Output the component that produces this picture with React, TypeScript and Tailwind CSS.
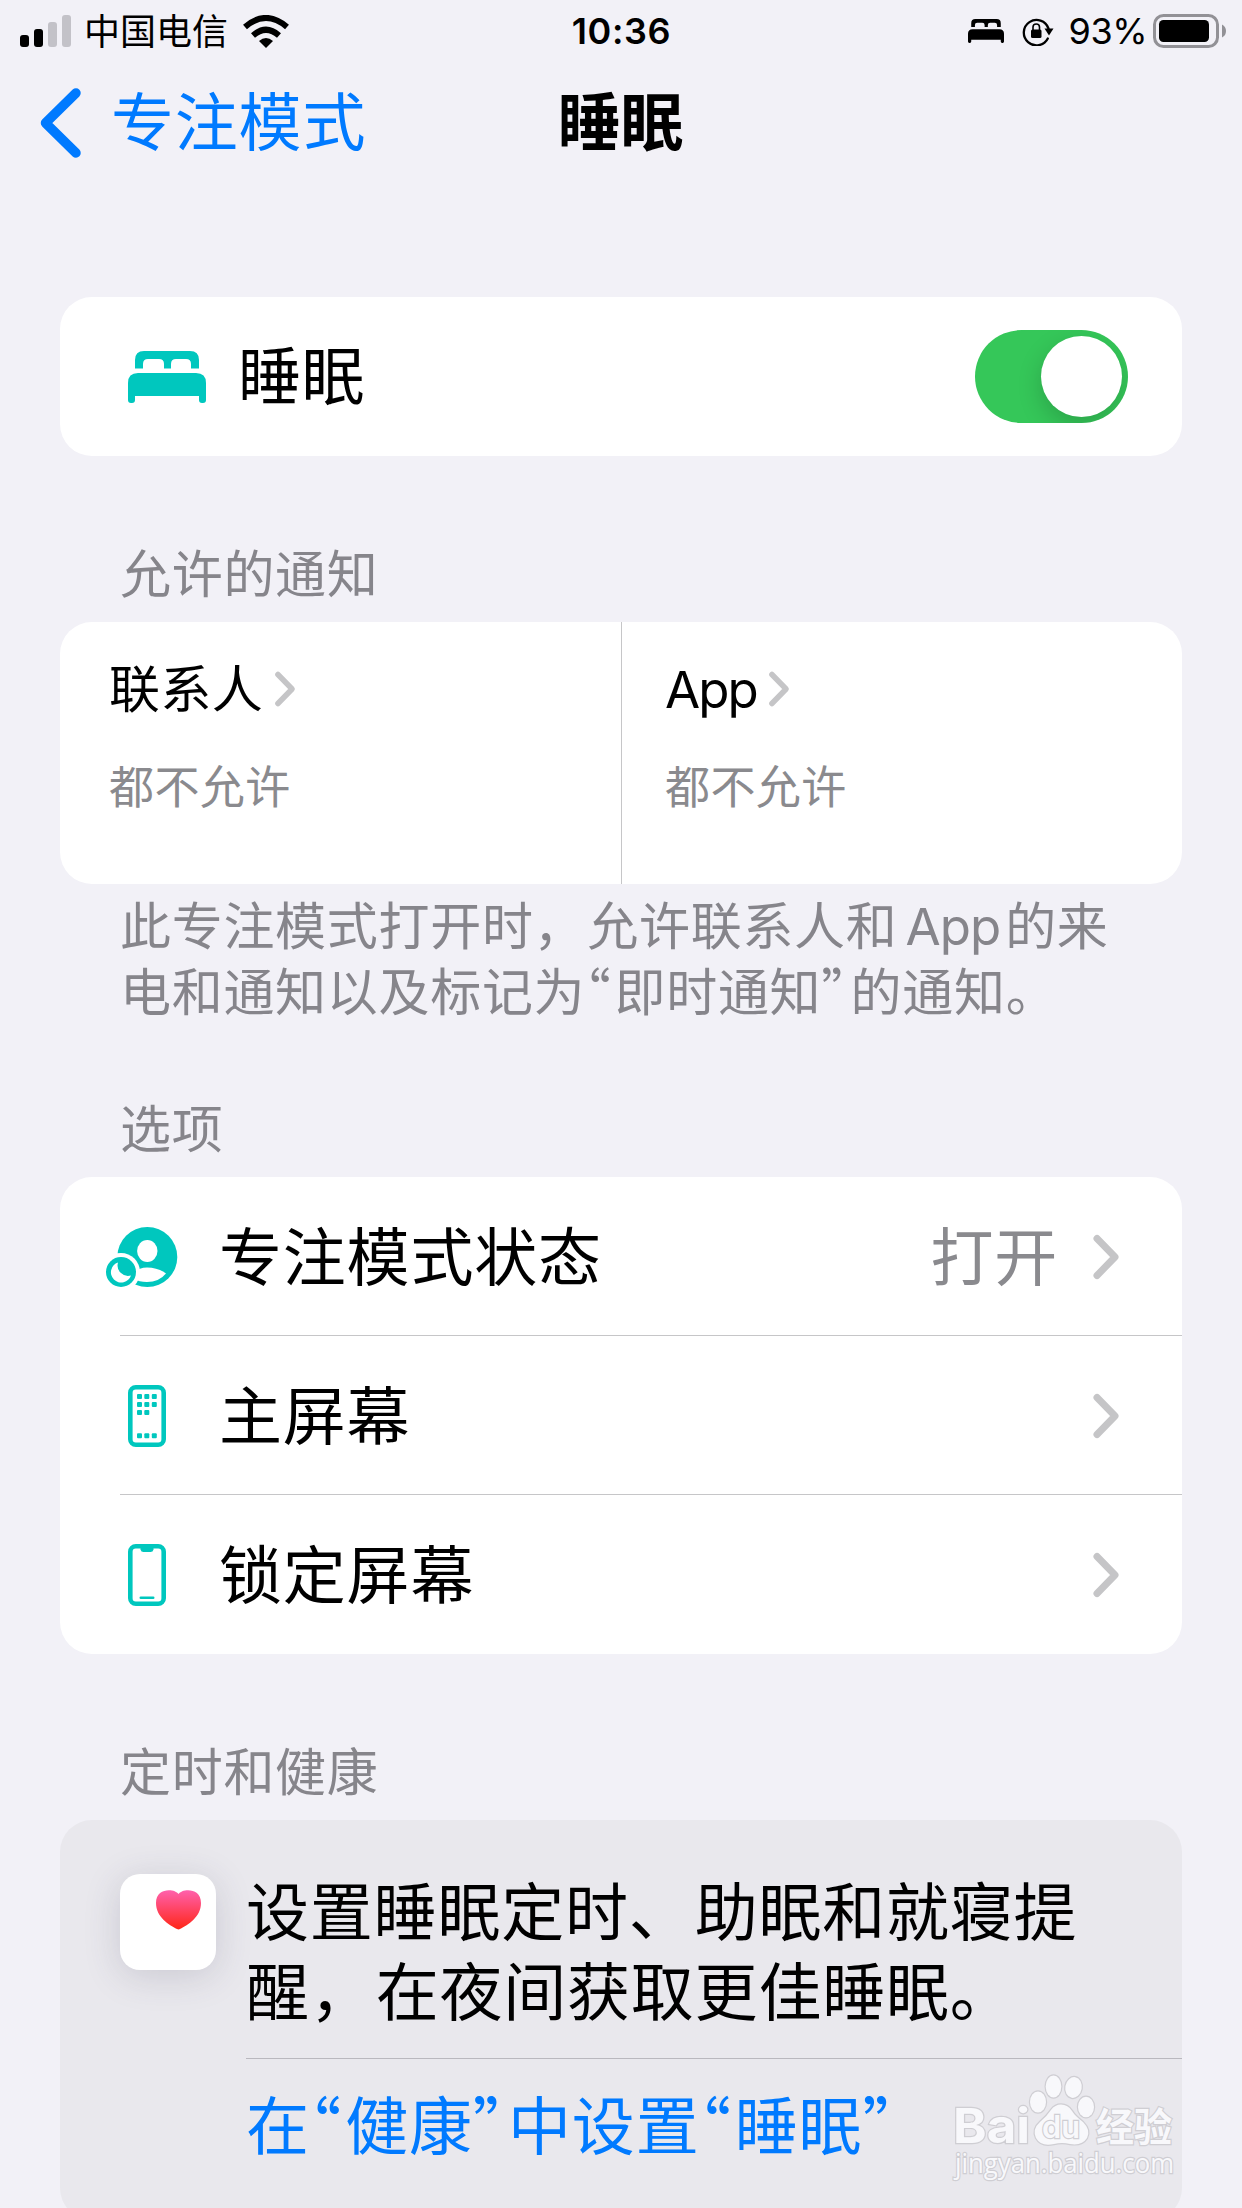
import React from 'react';
import clsx from 'clsx';

interface OptionItem {
  label: string;
  value?: string;
  icon: React.ReactNode;
}

const options: OptionItem[] = [
  { label: '专注模式状态', value: '打开', icon: <FocusStatusIcon /> },
  { label: '主屏幕', icon: <HomeScreenIcon /> },
  { label: '锁定屏幕', icon: <LockScreenIcon /> },
];

const allowed = [
  { title: '联系人', detail: '都不允许' },
  { title: 'App', detail: '都不允许' },
];

export default function App() {
  return (
    <div
      lang="zh-CN"
      className="relative h-[2208px] w-[1242px] overflow-hidden bg-[#f2f1f7] font-['Inter','Noto_Sans_CJK_SC',sans-serif] text-black"
    >
      <StatusBar />
      <NavBar />

      <main className="px-[60px] pt-[114px]">
        {/* Sleep switch */}
        <section className="flex h-[159px] items-center rounded-[32px] bg-white pr-[54px] pl-[68px]">
          <BedIcon className="h-[52px] w-[78px] text-[#00c7be]" />
          <span className="ml-[32px] flex-1 text-[63px] leading-none tracking-[0.6px]">睡眠</span>
          <Toggle />
        </section>

        {/* Allowed notifications */}
        <SectionHeader className="mt-[83px]">允许的通知</SectionHeader>
        <section className="grid h-[262px] grid-cols-[562px_1fr] rounded-[32px] bg-white">
          {allowed.map((item, i) => (
            <div
              key={item.title}
              className={clsx('pt-[41px]', i === 0 ? 'border-r border-[#c6c6c8] pl-[49px]' : 'pl-[43px]')}
            >
              <div className="flex h-[52px] items-center">
                <span className={clsx('text-[51px] leading-none', i === 0 ? 'tracking-[0.4px]' : 'tracking-[-2px]')}>
                  {item.title}
                </span>
                <Chevron className="ml-[11px] h-[38px] w-[22px]" />
              </div>
              <p className="mt-[47px] text-[45px] leading-[52px] tracking-[0.4px] text-[#8a8a8e]">{item.detail}</p>
            </div>
          ))}
        </section>
        <p className="h-[132px] pl-[60px] mt-[10px] text-[51px] leading-[66px] tracking-[0.7px] whitespace-nowrap text-[#86858b]">
          <Copy text="此专注模式打开时，允许联系人和App的来" />
          <br />
          <Copy text="电和通知以及标记为“即时通知”的通知。" />
        </p>

        {/* Options */}
        <SectionHeader className="mt-[68px]">选项</SectionHeader>
        <section className="overflow-hidden rounded-[32px] bg-white">
          {options.map((item, i) => (
            <OptionRow key={item.label} item={item} last={i === options.length - 1} />
          ))}
        </section>

        {/* Schedule and health */}
        <SectionHeader className="mt-[83px]">定时和健康</SectionHeader>
        <section className="h-[400px] rounded-[32px] bg-[#e9e8ed] pl-[60px]">
          <div className="flex">
            <HealthIcon />
            <div className="ml-[30px] flex-1">
              <p className="h-[239px] border-b border-[#b9b8be] pt-[52px] text-[63px] leading-[80px] tracking-[0.8px] whitespace-nowrap">
                <Copy text="设置睡眠定时、助眠和就寝提" />
                <br />
                <Copy text="醒，在夜间获取更佳睡眠。" />
              </p>
              <p className="pt-[27px] text-[63px] leading-[80px] tracking-[0.8px] whitespace-nowrap text-[#007aff]">
                <Copy text="在“健康”中设置“睡眠”" />
              </p>
            </div>
          </div>
        </section>
      </main>

      <Watermark />
    </div>
  );
}

// Body copy with half-width curly quotes and a little air around latin words
function Copy({ text }: { text: string }) {
  return (
    <>
      {text.split(/([“”，、]|App)/).map((part, i) => {
        if (part === '“' || part === '”') {
          return (
            <span key={i} className="mr-[3px] font-['Noto_Sans_CJK_SC',sans-serif] leading-none [font-feature-settings:'halt']">
              {part}
            </span>
          );
        }
        if (part === '，' || part === '、') return <span key={i} className="mr-[2px]">{part}</span>;
        if (part === 'App') return <span key={i} className="mr-[5px] ml-[8px] tracking-[-1px]">{part}</span>;
        return part;
      })}
    </>
  );
}

function StatusBar() {
  return (
    <header className="grid h-[62px] grid-cols-[1fr_auto_1fr] items-center pr-[15px] pl-[20px] text-[36px] leading-none">
      <div className="flex items-center">
        <svg viewBox="0 0 51 32" className="h-[32px] w-[51px]">
          <rect x="0" y="20" width="9" height="12" rx="3" />
          <rect x="14" y="14" width="9" height="18" rx="3" />
          <rect x="28" y="7" width="9" height="25" rx="3" fill="#c3c2c8" />
          <rect x="42" y="0" width="9" height="32" rx="3" fill="#c3c2c8" />
        </svg>
        <span className="mt-[2px] ml-[13px]">中国电信</span>
        <svg viewBox="0 0 46 33" className="ml-[15px] h-[33px] w-[46px]">
          <path d="M23 33 L16 26 Q23 20 30 26 Z" />
          <path d="M10 20.5 Q23 9 36 20.5" fill="none" stroke="#000" strokeWidth="6" />
          <path d="M2 12 Q23 -6 44 12" fill="none" stroke="#000" strokeWidth="6" />
        </svg>
      </div>
      <span className="-ml-[4px] font-semibold tracking-[0.6px]">10:36</span>
      <div className="flex items-center justify-end">
        <BedIcon className="h-[24px] w-[36px]" />
        <RotationLockIcon />
        <span className="ml-[15px] tracking-[-0.5px]">93%</span>
        <svg viewBox="0 0 74 34" className="ml-[6px] h-[34px] w-[74px]">
          <rect x="1.5" y="1.5" width="63" height="31" rx="9" fill="none" stroke="#929196" strokeWidth="3" />
          <rect x="6" y="6" width="50" height="22" rx="4.5" />
          <path d="M69 10.5 Q73 12.500 73 17 Q73 21.500 69 23.500 Z" fill="#929196" />
        </svg>
      </div>
    </header>
  );
}

function NavBar() {
  return (
    <nav className="grid h-[121px] grid-cols-[1fr_auto_1fr] items-center pl-[40px] text-[63px] leading-none">
      <a className="flex items-center text-[#007aff]">
        <svg viewBox="0 0 42 70" className="h-[70px] w-[42px]">
          <path
            d="M36 5 L5.500 35 L36 65"
            fill="none"
            stroke="currentColor"
            strokeWidth="9.500"
            strokeLinecap="round"
            strokeLinejoin="round"
          />
        </svg>
        <span className="ml-[29px] tracking-[0.8px]">专注模式</span>
      </a>
      <h1 className="-ml-[41px] font-bold">睡眠</h1>
      <span />
    </nav>
  );
}

function SectionHeader({ className, children }: { className?: string; children: React.ReactNode }) {
  return (
    <h2 className={clsx('h-[83px] pt-[3px] pl-[60px] text-[51px] leading-[66px] tracking-[0.7px] text-[#86858b]', className)}>
      {children}
    </h2>
  );
}

function OptionRow({ item, last }: { item: OptionItem; last: boolean }) {
  return (
    <div className="flex h-[159px] pl-[46px]">
      <div className="flex w-[72px] items-center">{item.icon}</div>
      <div className="relative flex flex-1 items-center pr-[62px] pl-[41px] text-[63px] leading-none tracking-[0.8px]">
        <span className="flex-1 pt-[2px]">{item.label}</span>
        {item.value && <span className="mr-[34px] pt-[2px] text-[#8a8a8e]">{item.value}</span>}
        <Chevron className="h-[46px] w-[28px]" />
        {!last && <div className="absolute right-0 bottom-0 -left-[58px] h-px bg-[#c6c6c8]" />}
      </div>
    </div>
  );
}

function Toggle() {
  return (
    <button className="flex h-[93px] w-[153px] items-center justify-end overflow-hidden rounded-full bg-[#35c759] p-[6px]">
      <span className="size-[81px] rounded-full bg-white shadow-[0_9px_24px_rgba(0,0,0,0.18)]" />
    </button>
  );
}

function Chevron({ className }: { className?: string }) {
  return (
    <svg viewBox="0 0 28 46" className={className}>
      <path
        d="M5 4.500 L23 23 L5 41.500"
        fill="none"
        stroke="#c5c5c7"
        strokeWidth="7"
        strokeLinecap="round"
        strokeLinejoin="round"
      />
    </svg>
  );
}

function BedIcon({ className }: { className?: string }) {
  return (
    <svg viewBox="0 0 78 52" fill="currentColor" className={className}>
      <path d="M7 17.500 V9 Q7 0 16 0 H62 Q71 0 71 9 V17.500 H63 V13 Q63 8 58 8 H48 Q43 8 43 13 V17.500 H36 V13 Q36 8 31 8 H20 Q15 8 15 13 V17.500 Z" />
      <path d="M0 32 Q0 22 10 22 H68 Q78 22 78 32 V49 Q78 52 75 52 H74 Q71 52 71 49 V45 H7 V49 Q7 52 4 52 H3 Q0 52 0 49 Z" />
    </svg>
  );
}

function RotationLockIcon() {
  return (
    <svg viewBox="0 0 32 30" className="ml-[18px] h-[30px] w-[32px]">
      <path
        d="M25.800 22.500 A12.700 12.700 0 1 1 26.500 12.500"
        fill="none"
        stroke="#000"
        strokeWidth="2.300"
        strokeLinecap="round"
      />
      <path d="M22.500 12.500 H31.500 L27 19.500 Z" />
      <rect x="9" y="13.500" width="10.500" height="8.500" rx="1.500" />
      <path d="M11 14 V11 Q11 8 14.200 8 Q17.500 8 17.500 11 V14" fill="none" stroke="#000" strokeWidth="1.600" />
    </svg>
  );
}

function FocusStatusIcon() {
  return (
    <svg viewBox="0 0 72 60" className="h-[60px] w-[72px]">
      <circle cx="41.300" cy="30" r="30" fill="#00c7be" />
      <ellipse cx="41.300" cy="24" rx="10.200" ry="11" fill="#fff" />
      <path d="M26 48 Q31 40.500 41 40.500 Q52 40.500 60 46.500 Q53 55 41 55 Q33 55 28 52 Z" fill="#fff" />
      <circle cx="15" cy="45" r="19" fill="#fff" />
      <circle cx="15" cy="45" r="15" fill="#00c7be" />
      <path d="M12 35.500 A10.300 10.300 0 1 0 25 48.500 A10.500 10.500 0 0 1 12 35.500 Z" fill="#fff" />
    </svg>
  );
}

function HomeScreenIcon() {
  const dots = [
    [9, 9], [16.3, 9], [23.8, 9],
    [9, 17], [16.3, 17], [23.8, 17],
    [9, 25], [16.3, 25],
    [9, 48.3], [16.3, 48.3], [23.8, 48.3],
  ];
  return (
    <svg viewBox="0 0 38 62" className="ml-[22px] h-[62px] w-[38px]">
      <rect x="2.300" y="2.300" width="33.400" height="57.400" rx="5.500" fill="none" stroke="#00c7be" strokeWidth="4.600" />
      {dots.map(([x, y]) => (
        <rect key={`${x}-${y}`} x={x} y={y} width="5" height="5" rx="1" fill="#00c7be" />
      ))}
    </svg>
  );
}

function LockScreenIcon() {
  return (
    <svg viewBox="0 0 38 62" className="ml-[22px] h-[62px] w-[38px]">
      <rect x="2.300" y="2.300" width="33.400" height="57.400" rx="5.500" fill="none" stroke="#00c7be" strokeWidth="4.600" />
      <path d="M12.500 3 H25.500 V5.500 Q25 8 22.500 8 H15.500 Q13 8 12.500 5.500 Z" fill="#00c7be" />
      <rect x="11.500" y="52.500" width="15" height="2.500" rx="1.250" fill="#00c7be" />
    </svg>
  );
}

function HealthIcon() {
  return (
    <div className="mt-[54px] size-[96px] rounded-[20px] bg-white shadow-[0_6px_36px_rgba(60,60,90,0.18)]">
      <svg viewBox="0 0 96 96" className="size-full">
        <defs>
          <linearGradient id="heart" x1="0" y1="0" x2="0" y2="1">
            <stop offset="0" stopColor="#ff61ad" />
            <stop offset="1" stopColor="#ff2617" />
          </linearGradient>
        </defs>
        <path
          d="M58.500 20 C62 14.500 81 13 81 29 C81 43 68 51 60 55 Q58.500 55.800 57 55 C49 51 36 43 36 29 C36 13 55 14.500 58.500 20 Z"
          fill="url(#heart)"
        />
      </svg>
    </div>
  );
}

// Translucent site mark over the bottom right corner
function Watermark() {
  return (
    <svg
      viewBox="0 0 240 124"
      className="absolute top-[2072px] left-[950px] h-[124px] w-[240px]"
      fill="#f8f8fb"
      stroke="#cfced3"
      strokeWidth="2.400"
      paintOrder="stroke"
    >
      <text x="3" y="71" textLength="77" lengthAdjust="spacingAndGlyphs" className="font-['Inter',sans-serif] text-[48px] font-bold">
        Bai
      </text>
      <ellipse cx="88" cy="30" rx="8" ry="10.500" />
      <ellipse cx="103.500" cy="14.500" rx="7.800" ry="11" />
      <ellipse cx="123.500" cy="15.500" rx="8.200" ry="10.500" transform="rotate(10 123.500 15.500)" />
      <ellipse cx="136" cy="35" rx="8" ry="10.300" />
      <path d="M111 32.500 Q118 32.500 122 39 Q125 44 133 50 Q141 58 137 66 Q132 74 120 72 Q112 70 104 72 Q91 75 86 66 Q82 57 90 50 Q97 44 101 38 Q105 32.500 111 32.500 Z" />
      <text x="92" y="66" textLength="38" lengthAdjust="spacingAndGlyphs" className="font-['Inter',sans-serif] text-[31px] font-semibold">
        du
      </text>
      <text x="146" y="69" textLength="76" lengthAdjust="spacingAndGlyphs" className="font-['Noto_Sans_CJK_SC',sans-serif] text-[39px] font-bold">
        经验
      </text>
      <text x="5" y="101" textLength="219" lengthAdjust="spacingAndGlyphs" className="font-['Open_Sans','Noto_Sans',sans-serif] text-[27px]">
        jingyan.baidu.com
      </text>
    </svg>
  );
}
